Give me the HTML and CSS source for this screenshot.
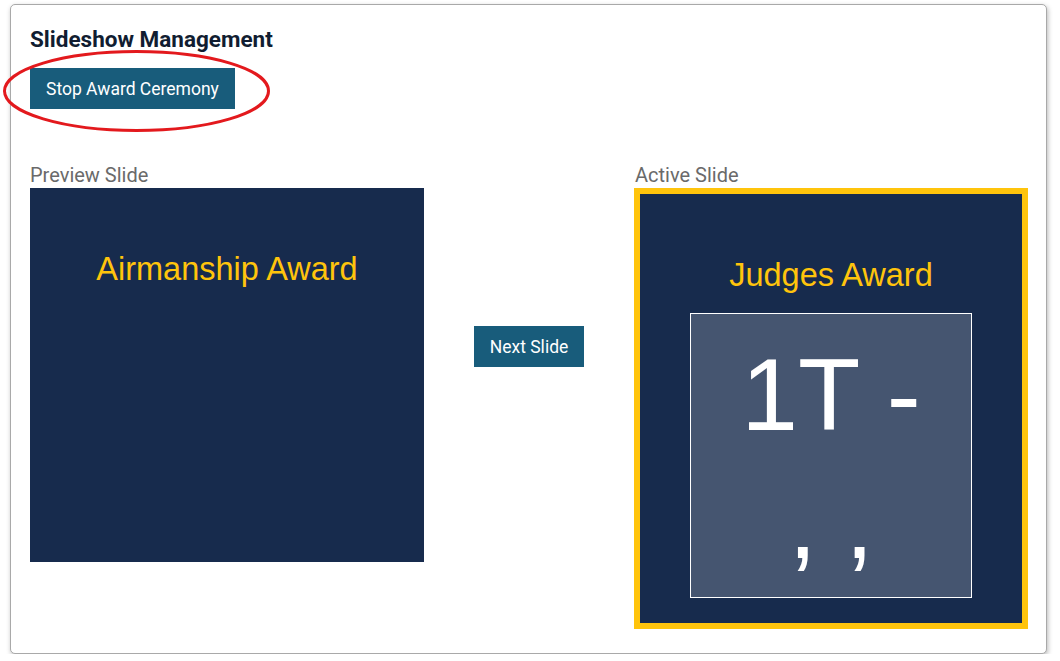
FILE: index.html
```html
<!DOCTYPE html>
<html>
<head>
<meta charset="utf-8">
<link rel="stylesheet" href="styles.css">
</head>
<body>
<div class="card">
  <h2 class="title">Slideshow Management</h2>
  <div class="actions">
    <button class="btn">Stop Award Ceremony</button>
    <svg class="annot" width="274" height="90" viewBox="0 0 274 90"><ellipse cx="136.5" cy="44" rx="132" ry="39.5" fill="none" stroke="#e3191d" stroke-width="3"/></svg>
  </div>
  <div class="row">
    <div class="col">
      <div class="label">Preview Slide</div>
      <div class="slide preview">
        <div class="slide-title">Airmanship Award</div>
      </div>
    </div>
    <div class="mid">
      <button class="btn">Next Slide</button>
    </div>
    <div class="col">
      <div class="label">Active Slide</div>
      <div class="slide active">
        <div class="slide-title">Judges Award</div>
        <div class="team">
          <div class="team-line">1T -</div>
          <div class="team-line second">, ,</div>
        </div>
      </div>
    </div>
  </div>
</div>
</body>
</html>
```
FILE: styles.css
```css
html, body { margin: 0; padding: 0; background: #ffffff; }
body { font-family: Roboto, "Noto Sans", sans-serif; }
.card {
  box-sizing: border-box;
  width: 1037px;
  height: 650px;
  margin: 4px 0 0 10px;
  padding: 22px 18px 24px 19px;
  background: #fff;
  border: 1px solid #a9a9a9;
  border-radius: 5px;
  box-shadow: 1px 2px 5px rgba(0,0,0,0.28);
}
.title {
  margin: 0;
  font-size: 22.5px;
  line-height: 24px;
  font-weight: 700;
  color: #111d31;
}
.actions { position: relative; margin-top: 17px; height: 41px; }
.btn {
  display: inline-block;
  border: 0;
  border-radius: 0;
  margin: 0;
  background: #185c7b;
  color: #fff;
  font-family: Roboto, sans-serif;
  font-size: 17.5px;
  line-height: 25px;
  padding: 9px 16px 7px;
}
.annot { position: absolute; left: -30px; top: -21px; }
.row { display: flex; margin-top: 54px; }
.col { width: 394px; flex: none; }
.mid { flex: 1; display: flex; justify-content: center; align-items: flex-start; padding-top: 163px; }
.label {
  font-size: 20px;
  line-height: 24px;
  color: #6a6a6a;
  margin-bottom: 1px;
  padding-left: 1px;
}
.col:first-child .label { padding-left: 0; }
.slide {
  box-sizing: border-box;
  background: #172b4d;
  font-family: "Liberation Sans", Arial, sans-serif;
  text-align: center;
}
.preview { height: 374px; }
.active { height: 441px; border: 6px solid #ffc40c; padding: 0 50px; }
.slide-title {
  padding-top: 63px;
  font-size: 32.5px;
  line-height: 37px;
  color: #ffc40c;
}
.team {
  margin-top: 19px;
  height: 285px;
  box-sizing: border-box;
  border: 1px solid #fff;
  background: #455570;
  padding-top: 20px;
  color: #fff;
}
.team-line { font-size: 102px; line-height: 122px; white-space: pre; }
.team-line.second { margin-top: 6px; }
```
